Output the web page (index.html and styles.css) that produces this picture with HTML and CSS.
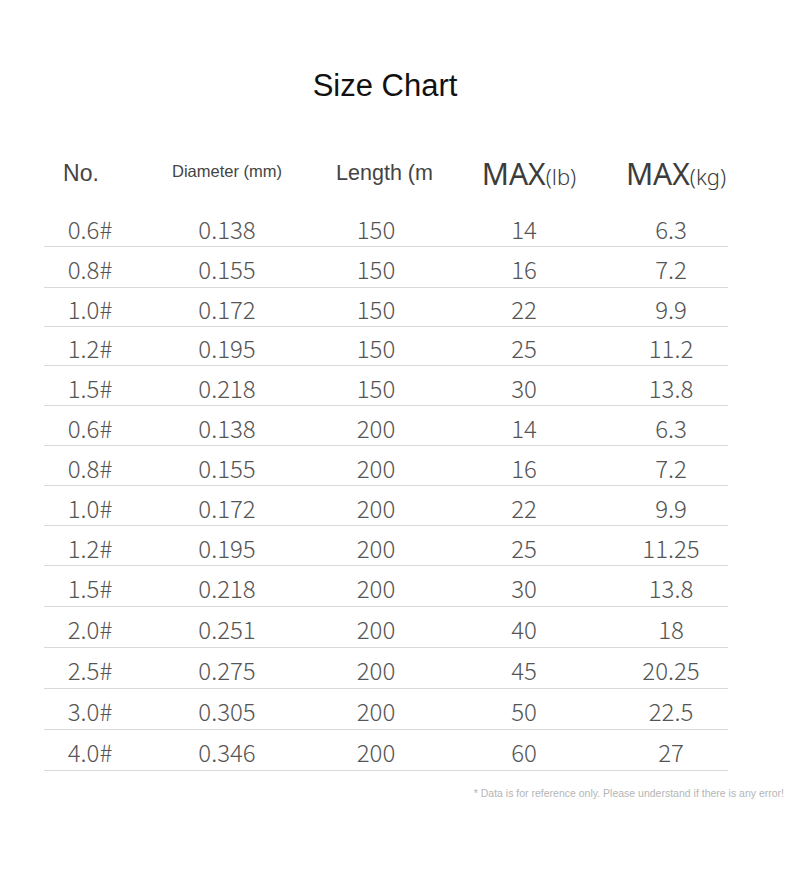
FILE: index.html
```html
<!DOCTYPE html>
<html>
<head>
<meta charset="utf-8">
<link rel="stylesheet" href="styles.css">
</head>
<body>
<div class="page">
  <h1 class="title">Size Chart</h1>
  <div class="chart">
    <div class="row head">
      <div class="cell h-no">No.</div>
      <div class="cell h-dia">Diameter (mm)</div>
      <div class="cell h-len">Length (m</div>
      <div class="cell h-max">MAX<span class="unit">(lb)</span></div>
      <div class="cell h-max">MAX<span class="unit">(kg)</span></div>
    </div>
    <div class="row r"><div class="cell">0.6#</div><div class="cell">0.138</div><div class="cell">150</div><div class="cell">14</div><div class="cell">6.3</div></div>
    <div class="row r"><div class="cell">0.8#</div><div class="cell">0.155</div><div class="cell">150</div><div class="cell">16</div><div class="cell">7.2</div></div>
    <div class="row r"><div class="cell">1.0#</div><div class="cell">0.172</div><div class="cell">150</div><div class="cell">22</div><div class="cell">9.9</div></div>
    <div class="row r"><div class="cell">1.2#</div><div class="cell">0.195</div><div class="cell">150</div><div class="cell">25</div><div class="cell">11.2</div></div>
    <div class="row r"><div class="cell">1.5#</div><div class="cell">0.218</div><div class="cell">150</div><div class="cell">30</div><div class="cell">13.8</div></div>
    <div class="row r"><div class="cell">0.6#</div><div class="cell">0.138</div><div class="cell">200</div><div class="cell">14</div><div class="cell">6.3</div></div>
    <div class="row r"><div class="cell">0.8#</div><div class="cell">0.155</div><div class="cell">200</div><div class="cell">16</div><div class="cell">7.2</div></div>
    <div class="row r"><div class="cell">1.0#</div><div class="cell">0.172</div><div class="cell">200</div><div class="cell">22</div><div class="cell">9.9</div></div>
    <div class="row r"><div class="cell">1.2#</div><div class="cell">0.195</div><div class="cell">200</div><div class="cell">25</div><div class="cell">11.25</div></div>
    <div class="row r"><div class="cell">1.5#</div><div class="cell">0.218</div><div class="cell">200</div><div class="cell">30</div><div class="cell">13.8</div></div>
    <div class="row r"><div class="cell">2.0#</div><div class="cell">0.251</div><div class="cell">200</div><div class="cell">40</div><div class="cell">18</div></div>
    <div class="row r"><div class="cell">2.5#</div><div class="cell">0.275</div><div class="cell">200</div><div class="cell">45</div><div class="cell">20.25</div></div>
    <div class="row r"><div class="cell">3.0#</div><div class="cell">0.305</div><div class="cell">200</div><div class="cell">50</div><div class="cell">22.5</div></div>
    <div class="row r"><div class="cell">4.0#</div><div class="cell">0.346</div><div class="cell">200</div><div class="cell">60</div><div class="cell">27</div></div>
  </div>
  <p class="note">* Data is for reference only. Please understand if there is any error!</p>
</div>
</body>
</html>
```
FILE: styles.css
```css
html, body {
  margin: 0;
  padding: 0;
  background: #ffffff;
}
.page {
  width: 790px;
  height: 878px;
  padding-top: 66px;
  box-sizing: border-box;
  font-family: "Liberation Sans", Arial, sans-serif;
}
.title {
  margin: 0;
  padding-right: 20px;
  text-align: center;
  font-weight: normal;
  font-size: 31px;
  line-height: 40px;
  color: #111;
}
.chart {
  margin: 39px 0 0 44px;
  width: 684px;
}
.row {
  display: grid;
  grid-template-columns: 92px 182px 116px 180px 114px;
  align-items: center;
}
.cell {
  text-align: center;
  white-space: nowrap;
}
.head {
  height: 62px;
  box-sizing: border-box;
  padding-bottom: 6px;
  color: #444;
}
.h-no {
  font-size: 23px;
  padding-right: 18px;
}
.h-dia {
  font-size: 16.5px;
  padding-bottom: 4px;
}
.h-len {
  font-size: 21.5px;
  padding-left: 17px;
}
.h-max {
  font-family: "Noto Sans", sans-serif;
  font-size: 30px;
  color: #3c3c3c;
  padding-left: 10px;
}
.unit {
  font-size: 22px;
  font-weight: 300;
}
.r {
  height: 40px;
  box-sizing: border-box;
  border-bottom: 1px solid #d9d9d9;
  font-family: "Noto Sans CJK SC", "Noto Sans", sans-serif;
  font-weight: 300;
  font-size: 24px;
  color: #555;
  padding-top: 3px;
}
.r:nth-child(3) {
  height: 41px;
}
.r:nth-child(4), .r:nth-child(5) {
  height: 39px;
}
.r:nth-child(n+11) {
  height: 41px;
}
.note {
  margin: 16px 6px 0 0;
  text-align: right;
  font-size: 10.5px;
  color: #b5b5b5;
}
```
